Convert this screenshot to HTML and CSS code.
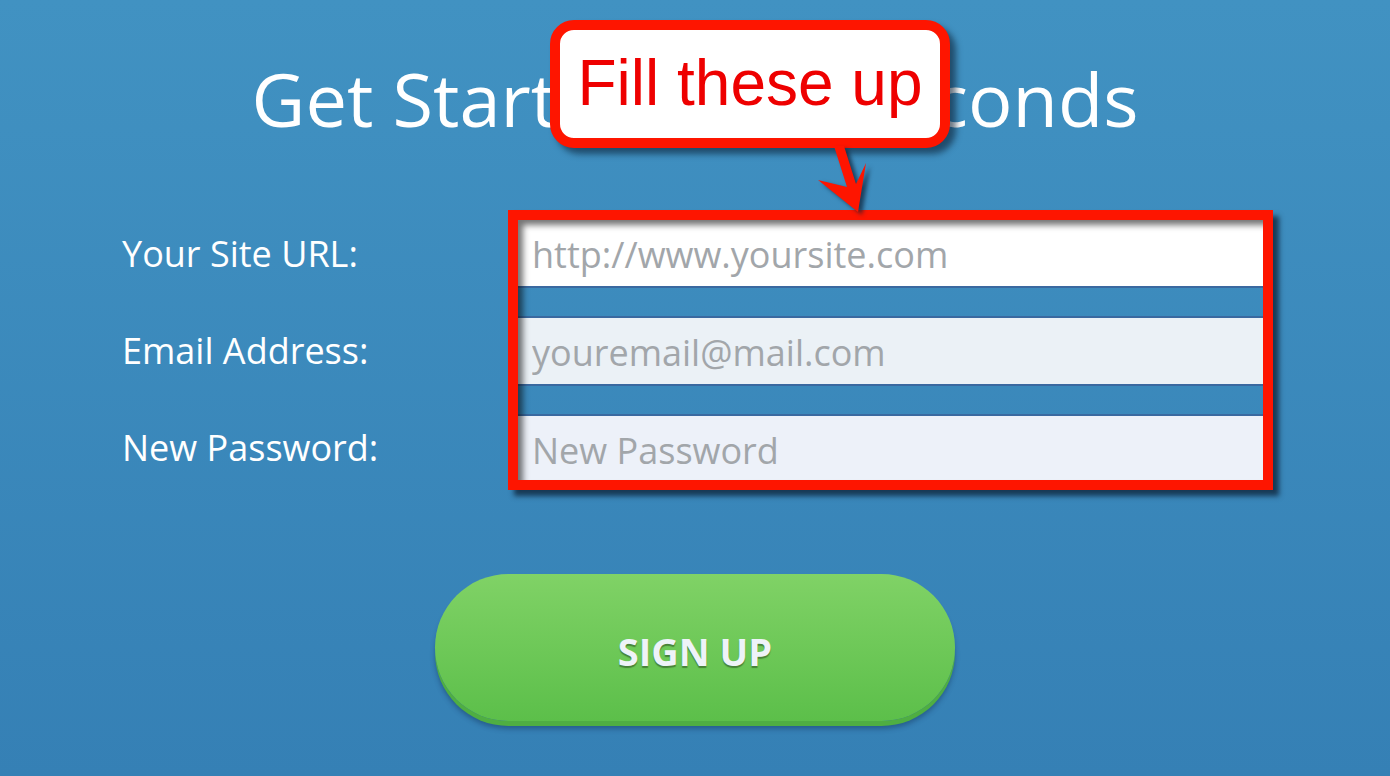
FILE: index.html
```html
<!DOCTYPE html>
<html lang="en">
<head>
<meta charset="utf-8">
<title>Get Started</title>
<link rel="stylesheet" href="styles.css">
</head>
<body>
<main class="page">
  <h1 class="title">Get Started in 60 Seconds</h1>
  <form class="signup">
    <div class="labels">
      <label class="label" for="site">Your Site URL:</label>
      <label class="label" for="email">Email Address:</label>
      <label class="label" for="pass">New Password:</label>
    </div>
    <div class="fields">
      <input class="field field-url" id="site" type="text" placeholder="http://www.yoursite.com" autofocus>
      <input class="field field-email" id="email" type="text" placeholder="youremail@mail.com">
      <input class="field field-pass" id="pass" type="text" placeholder="New Password">
    </div>
  </form>
  <div class="actions">
    <button class="btn-signup" type="button">SIGN UP</button>
  </div>

  <div class="callout">Fill these up</div>
  <svg class="arrow" width="80" height="90" viewBox="800 140 80 90" aria-hidden="true">
    <polygon points="834,146 844,146 856,184 866,163 858,212 818,180 847,187" fill="#fe1500"/>
  </svg>
</main>
</body>
</html>
```

FILE: styles.css
```css
html, body {
  margin: 0;
  padding: 0;
}

body {
  font-family: "Open Sans", "Noto Sans", sans-serif;
}

.page {
  position: relative;
  width: 1390px;
  height: 776px;
  overflow: hidden;
  background: linear-gradient(#4192c2, #3580b5);
  display: flex;
  flex-direction: column;
}

.title {
  margin: 57px 0 0;
  font-size: 74px;
  line-height: 84px;
  font-weight: 400;
  color: #ffffff;
  text-align: center;
}

.signup {
  margin-top: 69px;
  display: flex;
  padding-left: 122px;
}

.labels {
  width: 386px;
  padding-top: 10px;
  display: flex;
  flex-direction: column;
  gap: 29px;
}

.label {
  height: 68px;
  line-height: 68px;
  font-size: 36px;
  color: #ffffff;
}

.fields {
  position: relative;
  width: 745px;
  border: 10px solid #fe1500;
  display: flex;
  flex-direction: column;
  gap: 28px;
  box-shadow: 6px 6px 5px rgba(12, 32, 52, 0.75);
}

.fields::after {
  content: "";
  position: absolute;
  inset: 0;
  pointer-events: none;
  box-shadow: inset 6px 6px 6px -1px rgba(0, 0, 0, 0.55);
}

.field {
  box-sizing: border-box;
  height: 68px;
  margin: 0;
  padding: 2px 0 0 14px;
  border: none;
  outline: none;
  font-family: "Open Sans", "Noto Sans", sans-serif;
  font-size: 36px;
  color: #333;
  caret-color: #222;
}

.field::placeholder {
  color: #a2a6aa;
  opacity: 1;
}

.field-url {
  background: #ffffff;
  border-bottom: 2px solid #3a69a0;
}

.field-email {
  height: 70px;
  background: #ebf1f6;
  border-top: 2px solid #3a69a0;
  border-bottom: 2px solid #3a69a0;
}

.field-pass {
  height: 66px;
  padding-top: 4px;
  background: #edf1f9;
  border-top: 2px solid #3a69a0;
}

.actions {
  margin-top: 84px;
  display: flex;
  justify-content: center;
}

.btn-signup {
  width: 520px;
  height: 147px;
  padding-top: 8px;
  border: none;
  border-radius: 80px;
  background: linear-gradient(#80d266, #5cbf4a);
  box-shadow: 0 5px 0 #4fae42, 0 8px 5px rgba(20, 50, 90, 0.45);
  font-family: "Open Sans", "Noto Sans", sans-serif;
  font-weight: 700;
  font-size: 38px;
  color: #eef3f8;
  text-shadow: 0 2px 1px rgba(0, 0, 0, 0.35);
  cursor: pointer;
}

.callout {
  position: absolute;
  left: 550px;
  top: 20px;
  box-sizing: border-box;
  width: 400px;
  height: 128px;
  border: 10px solid #fe1500;
  border-radius: 24px;
  background: #ffffff;
  box-shadow: 6px 6px 6px rgba(12, 32, 52, 0.6);
  font-family: "Liberation Sans", Arial, sans-serif;
  font-size: 64px;
  line-height: 106px;
  color: #ee0000;
  text-align: center;
}

.arrow {
  position: absolute;
  left: 800px;
  top: 140px;
  filter: drop-shadow(4px 3px 2px rgba(12, 32, 52, 0.7));
}
```
